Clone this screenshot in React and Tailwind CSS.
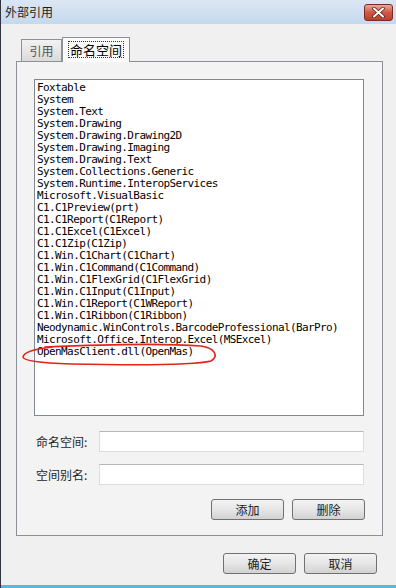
const items = [
  'Foxtable',
  'System',
  'System.Text',
  'System.Drawing',
  'System.Drawing.Drawing2D',
  'System.Drawing.Imaging',
  'System.Drawing.Text',
  'System.Collections.Generic',
  'System.Runtime.InteropServices',
  'Microsoft.VisualBasic',
  'C1.C1Preview(prt)',
  'C1.C1Report(C1Report)',
  'C1.C1Excel(C1Excel)',
  'C1.C1Zip(C1Zip)',
  'C1.Win.C1Chart(C1Chart)',
  'C1.Win.C1Command(C1Command)',
  'C1.Win.C1FlexGrid(C1FlexGrid)',
  'C1.Win.C1Input(C1Input)',
  'C1.Win.C1Report(C1WReport)',
  'C1.Win.C1Ribbon(C1Ribbon)',
  'Neodynamic.WinControls.BarcodeProfessional(BarPro)',
  'Microsoft.Office.Interop.Excel(MSExcel)',
  'OpenMasClient.dll(OpenMas)',
];

const cjk = { fontFamily: '"Noto Sans CJK SC", "Noto Sans", sans-serif' };
const mono = { fontFamily: '"DejaVu Sans Mono", "Liberation Mono", monospace' };

function WinButton({ children }) {
  return (
    <button
      className="w-[73px] h-[21px] rounded-[3px] border border-[#707070] bg-gradient-to-b from-[#f3f3f3] via-[#e6e6e6] to-[#d2d2d2] text-[12px] leading-none text-[#1a1a1a]"
      style={cjk}
    >
      {children}
    </button>
  );
}

function Field({ label, className }) {
  return (
    <div className={`flex items-center ${className}`}>
      <span className="w-[65px] pl-[2px] text-[12px] text-[#1e1e1e]" style={cjk}>
        {label}
      </span>
      <div className="w-[265px] h-[21px] bg-white border border-[#dcdde2] border-t-[#b5b7bd]" />
    </div>
  );
}

export default function App() {
  return (
    <div className="relative w-[396px] h-[588px] bg-[#f0f0f0] flex flex-col border-l border-[#2e3440] overflow-hidden">
      {/* title bar */}
      <div className="h-[24px] shrink-0 flex items-center justify-between pl-[4px] pr-[3px] bg-gradient-to-b from-[#dbe6f3] to-[#c5d8ee]">
        <span className="text-[12px] text-[#1b1b1b]" style={cjk}>外部引用</span>
        <div className="w-[29px] h-[17px] rounded-[3px] border border-[#7a2a22] bg-gradient-to-b from-[#e8a899] via-[#cf5646] to-[#c23c2c] flex items-center justify-center">
          <svg width="13" height="11" viewBox="0 0 13 11">
            <path d="M2 1.5 L11 9.5 M11 1.5 L2 9.5" stroke="#5a1f18" strokeWidth="3.6" strokeLinecap="round" />
            <path d="M2 1.5 L11 9.5 M11 1.5 L2 9.5" stroke="#ffffff" strokeWidth="2" strokeLinecap="round" />
          </svg>
        </div>
      </div>

      {/* tabs */}
      <div className="pl-[20px] pt-[13px] flex items-end h-[37px] shrink-0">
        <div
          className="w-[41px] h-[22px] border border-b-0 border-[#8d9097] bg-gradient-to-b from-[#f2f2f2] to-[#dadada] flex items-center justify-center text-[12px] text-[#555]"
          style={cjk}
        >
          引用
        </div>
        <div className="relative z-10 w-[68px] h-[25px] -mb-px border border-b-0 border-[#8d9097] bg-[#fbfbfb] flex items-start justify-center pt-[3px]">
          <span className="border border-dotted border-[#333] px-[1px] text-[13px] leading-[15px] text-black" style={cjk}>
            命名空间
          </span>
        </div>
      </div>

      {/* tab panel */}
      <div className="ml-[15px] w-[367px] border border-[#8d9097] bg-[#f3f3f3] pt-[17px] pl-[17px] pb-[15px]">
        <div className="w-[330px] h-[337px] bg-white border border-[#828790] pt-[2px] pl-[2px]" style={mono}>
          {items.map((it) => (
            <div key={it} className="h-[12px] leading-[12px] text-[11px] tracking-[-0.6px] text-black whitespace-nowrap">
              {it}
            </div>
          ))}
        </div>
        <Field label="命名空间:" className="mt-[15px]" />
        <Field label="空间别名:" className="mt-[12px]" />
        <div className="mt-[14px] flex justify-end gap-[8px] pr-[17px]">
          <WinButton>添加</WinButton>
          <WinButton>删除</WinButton>
        </div>
      </div>

      {/* dialog buttons */}
      <div className="mt-[17px] flex justify-end gap-[8px] pr-[19px]">
        <WinButton>确定</WinButton>
        <WinButton>取消</WinButton>
      </div>

      <div className="flex-1" />
      <div className="h-[3px] bg-[#55bcd6] shrink-0" />

      {/* hand-drawn red mark */}
      <svg className="absolute left-0 top-0 pointer-events-none" width="396" height="588">
        <path
          d="M44 347 C90 345 160 343 200 346 C214 348 218 356 210 361 C190 366 120 365 70 364 C40 363 22 361 22 357 C23 352 32 349 52 347"
          fill="none"
          stroke="#e4231b"
          strokeWidth="1.6"
          strokeLinecap="round"
        />
      </svg>
    </div>
  );
}
